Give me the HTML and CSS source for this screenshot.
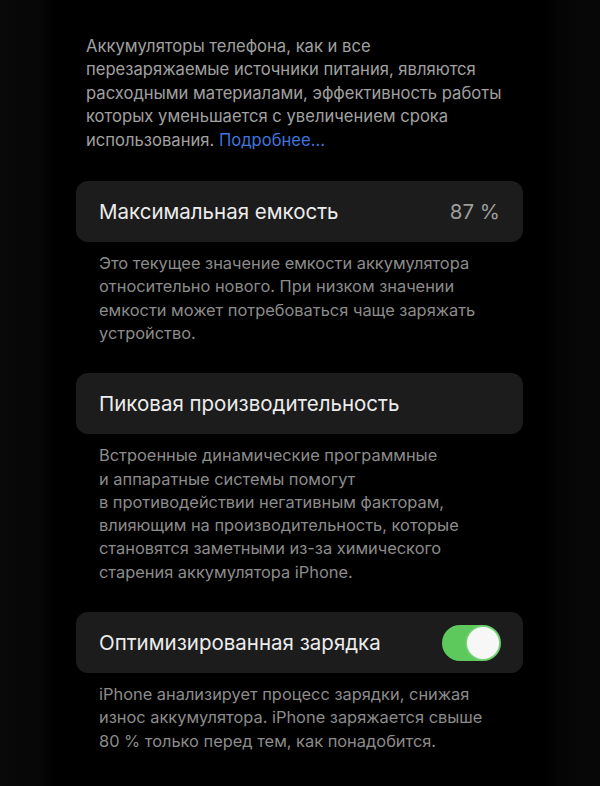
FILE: index.html
```html
<!DOCTYPE html>
<html lang="ru">
<head>
<meta charset="utf-8">
<link rel="stylesheet" href="styles.css">
</head>
<body>
<div class="screen">
  <div class="content">
    <p class="intro">Аккумуляторы телефона, как и все<br>перезаряжаемые источники питания, являются<br>расходными материалами, эффективность работы<br>которых уменьшается с увеличением срока<br>использования. <span class="link">Подробнее…</span></p>

    <div class="card">
      <span class="title">Максимальная емкость</span>
      <span class="value">87 %</span>
    </div>
    <p class="desc">Это текущее значение емкости аккумулятора<br>относительно нового. При низком значении<br>емкости может потребоваться чаще заряжать<br>устройство.</p>

    <div class="card">
      <span class="title">Пиковая производительность</span>
    </div>
    <p class="desc">Встроенные динамические программные<br>и аппаратные системы помогут<br>в противодействии негативным факторам,<br>влияющим на производительность, которые<br>становятся заметными из-за химического<br>старения аккумулятора iPhone.</p>

    <div class="card">
      <span class="title">Оптимизированная зарядка</span>
      <span class="toggle"><span class="knob"></span></span>
    </div>
    <p class="desc">iPhone анализирует процесс зарядки, снижая<br>износ аккумулятора. iPhone заряжается свыше<br>80 % только перед тем, как понадобится.</p>
  </div>
</div>
</body>
</html>
```

FILE: styles.css
```css
html, body {
  margin: 0;
  padding: 0;
  background: #000;
}
.screen {
  width: 600px;
  height: 786px;
  overflow: hidden;
  background: linear-gradient(to right, #090909 0px, #060606 40px, #000 55px, #000 545px, #050505 560px, #080808 600px);
  font-family: Inter, "Noto Sans", "Liberation Sans", sans-serif;
}
.content {
  margin-left: 76px;
  width: 447px;
  padding-top: 35px;
}
.intro {
  margin: 0 0 29px 10px;
  font-size: 16.6px;
  line-height: 23.4px;
  color: #a0a0a0;
  white-space: nowrap;
}
.link {
  color: #3f74dc;
}
.card {
  display: flex;
  align-items: center;
  justify-content: space-between;
  height: 61px;
  padding: 0 23px;
  background: #1c1c1d;
  border-radius: 12px;
}
.title {
  font-size: 20.5px;
  color: #ececec;
}
.value {
  font-size: 20.5px;
  color: #9c9c9c;
}
.desc {
  margin: 10px 0 28px 23px;
  font-size: 16.4px;
  line-height: 23.3px;
  color: #8c8c8c;
  white-space: nowrap;
}
.toggle {
  display: flex;
  align-items: center;
  justify-content: flex-end;
  width: 59px;
  height: 36px;
  padding: 2px;
  box-sizing: border-box;
  margin-right: -1px;
  border-radius: 18px;
  background: #5dc95d;
}
.knob {
  width: 32px;
  height: 32px;
  border-radius: 50%;
  background: #f7f7f7;
  box-shadow: 0 0 3px rgba(255,255,255,0.6);
}
```
